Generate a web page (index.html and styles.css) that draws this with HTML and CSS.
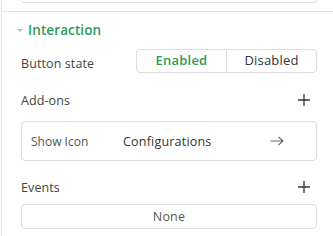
FILE: index.html
```html
<!DOCTYPE html>
<html>
<head>
<meta charset="utf-8">
<link rel="stylesheet" href="styles.css">
</head>
<body>
<div class="panel">
  <div class="prev"><div class="prev-box"></div></div>
  <div class="section">
    <div class="sec-head">
      <span class="caret"></span>
      <span class="sec-title">Interaction</span>
    </div>
    <div class="row state-row">
      <span class="label state-label">Button state</span>
      <div class="seg">
        <span class="seg-btn active">Enabled</span>
        <span class="seg-btn">Disabled</span>
      </div>
    </div>
    <div class="row head-row">
      <span class="label">Add-ons</span>
      <svg class="plus" width="12" height="12" viewBox="0 0 12 12"><path d="M6 0V12M0 6H12" stroke="#333" stroke-width="1.3"/></svg>
    </div>
    <div class="addon">
      <span class="addon-name">Show Icon</span>
      <span class="addon-cfg">Configurations</span>
      <svg class="arrow" width="14" height="10" viewBox="0 0 14 10"><path d="M0.5 5H13M8.5 1L13 5L8.5 9" fill="none" stroke="#666" stroke-width="1.1"/></svg>
    </div>
    <div class="row head-row events">
      <span class="label">Events</span>
      <svg class="plus" width="12" height="12" viewBox="0 0 12 12"><path d="M6 0V12M0 6H12" stroke="#333" stroke-width="1.3"/></svg>
    </div>
    <div class="none-box">None</div>
  </div>
</div>
</body>
</html>
```
FILE: styles.css
```css
* { box-sizing: border-box; }
html, body { margin: 0; padding: 0; background: #fff; }
body { font-family: "Open Sans", "Noto Sans", sans-serif; color: #444; width: 333px; height: 236px; overflow: hidden; }
.panel { border-left: 1px solid #e4e4e4; margin-left: 1px; height: 236px; }
.prev { height: 12px; border-bottom: 1px solid #e4e4e4; padding: 0 16px 0 19px; }
.prev-box { height: 3px; border: 1px solid #e4e4e4; border-top: none; border-radius: 0 0 4px 4px; }
.section { padding: 0 16px 0 19px; }
.sec-head { display: flex; align-items: center; height: 36px; }
.caret { width: 0; height: 0; border-left: 3px solid transparent; border-right: 3px solid transparent; border-top: 3px solid #bbb; margin-left: -4px; margin-right: 5px; }
.sec-title { font-size: 13.5px; font-weight: 600; color: #2a9c57; letter-spacing: 0.1px; }
.row { display: flex; align-items: center; justify-content: space-between; }
.label { font-size: 12.5px; color: #444; letter-spacing: 0.1px; }
.state-row { height: 24px; margin-top: 1px; }
.state-label { padding-top: 5px; }
.seg { display: flex; width: 181px; height: 24px; border: 1px solid #ddd; border-radius: 4px; }
.seg-btn { flex: 1; display: flex; align-items: center; justify-content: center; font-size: 13px; font-weight: 500; color: #333; padding-bottom: 2px; letter-spacing: 0.2px; }
.seg-btn + .seg-btn { border-left: 1px solid #ddd; }
.seg-btn.active { color: #2a9c57; font-weight: 600; }
.head-row { height: 20px; margin-top: 17px; }
.plus { margin-right: 7px; }
.addon { display: flex; align-items: center; height: 40px; margin-top: 11px; border: 1px solid #ddd; border-radius: 4px; padding-left: 9px; }
.addon-name { font-size: 12px; color: #555; width: 92px; }
.addon-cfg { font-size: 12.5px; font-weight: 500; color: #333; flex: 1; letter-spacing: 0.2px; }
.arrow { margin-right: 32px; }
.events { margin-top: 16px; }
.none-box { margin-top: 7px; height: 25px; border: 1px solid #ddd; border-radius: 4px; display: flex; align-items: center; justify-content: center; font-size: 12.5px; color: #555; letter-spacing: 0.2px; }
```
